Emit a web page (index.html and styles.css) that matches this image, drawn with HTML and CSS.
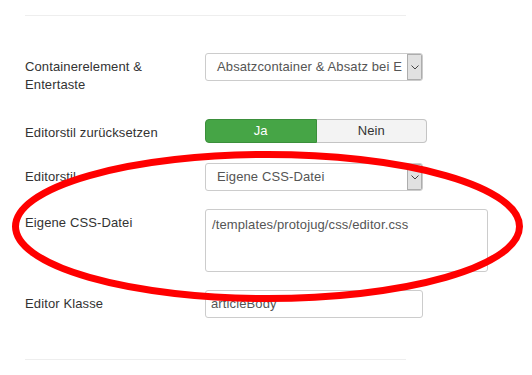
FILE: index.html
```html
<!DOCTYPE html>
<html lang="de">
<head>
<meta charset="utf-8">
<title>Editor Einstellungen</title>
<link rel="stylesheet" href="styles.css">
</head>
<body>
<div class="page">
  <div class="divider"></div>
  <div class="form">
    <div class="row row--loose">
      <div class="label">Containerelement &amp; Entertaste</div>
      <div class="control">
        <div class="select">
          <span class="select-value">Absatzcontainer &amp; Absatz bei E</span>
          <span class="select-arrow"><svg width="8" height="5" viewBox="0 0 8 5"><polyline points="0.5,0.5 4,4 7.5,0.5" fill="none" stroke="#444" stroke-width="1"/></svg></span>
        </div>
      </div>
    </div>
    <div class="row row--mid">
      <div class="label">Editorstil zurücksetzen</div>
      <div class="control">
        <div class="toggle">
          <span class="toggle-btn toggle-btn--on">Ja</span>
          <span class="toggle-btn toggle-btn--off">Nein</span>
        </div>
      </div>
    </div>
    <div class="row">
      <div class="label">Editorstil</div>
      <div class="control">
        <div class="select">
          <span class="select-value">Eigene CSS-Datei</span>
          <span class="select-arrow"><svg width="8" height="5" viewBox="0 0 8 5"><polyline points="0.5,0.5 4,4 7.5,0.5" fill="none" stroke="#444" stroke-width="1"/></svg></span>
        </div>
      </div>
    </div>
    <div class="row">
      <div class="label">Eigene CSS-Datei</div>
      <div class="control">
        <div class="textarea">/templates/protojug/css/editor.css</div>
      </div>
    </div>
    <div class="row row--last">
      <div class="label">Editor Klasse</div>
      <div class="control">
        <div class="input">articleBody</div>
      </div>
    </div>
  </div>
  <div class="divider"></div>
  <svg class="annotation" width="532" height="375" viewBox="0 0 532 375">
    <ellipse cx="267.5" cy="226.5" rx="252" ry="72" fill="none" stroke="#ff0000" stroke-width="7"/>
  </svg>
</div>
</body>
</html>
```
FILE: styles.css
```css
html, body {
  margin: 0;
  padding: 0;
  background: #ffffff;
}

body {
  font-family: "Liberation Sans", Arial, sans-serif;
  font-size: 13px;
  line-height: 18px;
  letter-spacing: 0.12px;
  color: #333333;
}

.page {
  position: relative;
  width: 532px;
  height: 375px;
  padding: 15px 0 0 25px;
  box-sizing: border-box;
  overflow: hidden;
}

.divider {
  width: 381px;
  height: 0;
  border-top: 1px solid #eeeeee;
}

.form {
  margin-top: 37px;
  margin-bottom: 41px;
}

.row {
  display: flex;
  align-items: flex-start;
  margin-bottom: 18px;
}

.row--loose {
  margin-bottom: 25px;
}

.row--mid {
  margin-bottom: 20px;
}

.row--last {
  margin-bottom: 0;
}

.label {
  width: 160px;
  padding-top: 5px;
  margin-right: 20px;
  color: #333333;
}

.control {
  flex: 0 0 auto;
}

.select {
  display: flex;
  width: 218px;
  height: 28px;
  box-sizing: border-box;
  border: 1px solid #cccccc;
  border-radius: 3px;
  background: #ffffff;
  overflow: hidden;
}

.select-value {
  flex: 1;
  min-width: 0;
  padding: 0 4px 0 11px;
  line-height: 26px;
  color: #555555;
  white-space: nowrap;
  overflow: hidden;
}

.select-arrow {
  display: flex;
  align-items: center;
  justify-content: center;
  width: 15px;
  box-sizing: border-box;
  border: 1px solid #adadad;
  background: #e1e1e1;
}

.toggle {
  display: flex;
  width: 222px;
  height: 24px;
}

.toggle-btn {
  flex: 1;
  display: flex;
  align-items: center;
  justify-content: center;
  box-sizing: border-box;
}

.toggle-btn--on {
  background: #46a546;
  border: 1px solid #3b8f3b;
  border-radius: 4px 0 0 4px;
  color: #ffffff;
}

.toggle-btn--off {
  background: #f3f3f3;
  border: 1px solid #c4c4c4;
  border-left: none;
  border-radius: 0 4px 4px 0;
  color: #333333;
}

.textarea {
  width: 283px;
  height: 63px;
  box-sizing: border-box;
  padding: 6px 6px;
  border: 1px solid #cccccc;
  border-radius: 3px;
  color: #555555;
  background: #ffffff;
}

.input {
  width: 218px;
  height: 28px;
  box-sizing: border-box;
  padding: 0 5px;
  line-height: 26px;
  border: 1px solid #cccccc;
  border-radius: 3px;
  color: #555555;
  background: #ffffff;
}

.annotation {
  position: absolute;
  top: 0;
  left: 0;
  pointer-events: none;
}
```
